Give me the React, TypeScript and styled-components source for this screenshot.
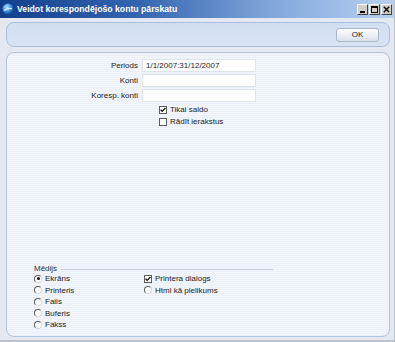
import React from 'react';
import styled, { createGlobalStyle } from 'styled-components';

const GlobalStyle = createGlobalStyle`
	html, body {
		margin: 0;
		padding: 0;
		background: #ffffff;
	}
	body {
		font-family: "Liberation Sans", Arial, sans-serif;
		font-size: 8px;
		color: #1c1c1c;
	}
`

const Window = styled.div`
	width: 395px;
	height: 342px;
	box-sizing: border-box;
	display: flex;
	flex-direction: column;
	background: #e4e9f1;
	border-right: 1px solid #b9c1cb;
	border-bottom: 2px solid #bcc3cc;
`

const TitleBar = styled.div`
	height: 18px;
	flex: none;
	display: flex;
	align-items: center;
	padding: 0 2px 0 2px;
	background: linear-gradient(90deg, #123f8c 0%, #3465b0 35%, #82a8dc 70%, #b9d1f0 100%);
`

const Title = styled.span`
	flex: 1;
	margin-left: 3px;
	color: #ffffff;
	font-weight: bold;
	font-size: 8.7px;
	white-space: nowrap;
`

const Controls = styled.div`
	display: flex;
	gap: 1px;
`

const CtrlButton = styled.div`
	width: 11px;
	height: 11px;
	box-sizing: border-box;
	background: #d4d0c8;
	border: 1px solid;
	border-color: #ffffff #404040 #404040 #ffffff;
	display: flex;
	align-items: center;
	justify-content: center;
`

const Body = styled.div`
	flex: 1;
	display: flex;
	flex-direction: column;
	gap: 5px;
	padding: 4px 4px 3px 6px;
`

const Toolbar = styled.div`
	height: 25px;
	box-sizing: border-box;
	flex: none;
	display: flex;
	align-items: center;
	justify-content: flex-end;
	padding-right: 10px;
	border: 1px solid #a9bedc;
	border-radius: 8px;
	background: linear-gradient(180deg, #d1dff2 0%, #d8e3f3 100%);
`

const OkButton = styled.button`
	width: 43px;
	height: 14px;
	padding: 0;
	font-family: "Liberation Sans", Arial, sans-serif;
	font-size: 8px;
	color: #1c1c1c;
	border: 1px solid #a9b6c8;
	border-radius: 3px;
	background: linear-gradient(180deg, #fbfcfe 0%, #e9eef5 60%, #d9e1ec 100%);
`

const Panel = styled.div`
	flex: 1;
	display: flex;
	flex-direction: column;
	box-sizing: border-box;
	padding: 6px 0 7px 0;
	border: 1px solid #b3c4dd;
	border-radius: 8px;
	background: repeating-linear-gradient(180deg, #ecf0f8 0px, #ecf0f8 1px, #f2f5fa 1px, #f2f5fa 2px);
`

const FormGrid = styled.div`
	display: grid;
	grid-template-columns: 131px 114px;
	column-gap: 4px;
	row-gap: 2px;
	align-items: center;
`

const Label = styled.label`
	text-align: right;
	white-space: nowrap;
`

const Field = styled.div`
	height: 13px;
	box-sizing: border-box;
	background: #ffffff;
	border: 1px solid #dfe3ea;
	padding-left: 3px;
	line-height: 11px;
	white-space: nowrap;
`

const Options = styled.div`
	display: flex;
	flex-direction: column;
	gap: 3px;
	margin: 3px 0 0 152px;
`

const Option = styled.div`
	display: flex;
	align-items: center;
	gap: 3px;
	height: 9px;
	white-space: nowrap;
`

const Box = styled.span`
	width: 8px;
	height: 8px;
	box-sizing: border-box;
	flex: none;
	background: #ffffff;
	border: 1px solid #5a5a5a;
	display: flex;
	align-items: center;
	justify-content: center;
`

const Round = styled.span<{ $on?: boolean }>`
	width: 8px;
	height: 8px;
	box-sizing: border-box;
	flex: none;
	border-radius: 50%;
	background: #ffffff;
	border: 1px solid #7d7d7d;
	border-top-color: #5c5c5c;
	border-left-color: #5c5c5c;
	border-right-color: #d8d8d8;
	border-bottom-color: #d8d8d8;
	display: flex;
	align-items: center;
	justify-content: center;
	&::after {
		content: '';
		display: ${p => (p.$on ? 'block' : 'none')};
		width: 3px;
		height: 3px;
		border-radius: 50%;
		background: #111111;
	}
`

const Group = styled.div`
	margin-top: auto;
	padding-left: 27px;
`

const Legend = styled.div`
	display: flex;
	align-items: center;
	gap: 4px;
	width: 239px;
	height: 10px;
	color: #333333;
	&::after {
		content: '';
		flex: 1;
		height: 1px;
		margin-top: 2px;
		background: #c9ced6;
	}
`

const Columns = styled.div`
	display: grid;
	grid-template-columns: 110px auto;
	margin-top: 1px;
`

const Column = styled.div`
	display: flex;
	flex-direction: column;
	gap: 2.5px;
`

function Check({ checked, children }: { checked?: boolean; children: React.ReactNode }) {
	return (
		<Option>
			<Box>
				{checked && (
					<svg width="6" height="6" viewBox="0 0 6 6">
						<path d="M0.6 2.8 L2.2 4.4 L5.4 1.0" stroke="#111" strokeWidth="1.3" fill="none" />
					</svg>
				)}
			</Box>
			<span>{children}</span>
		</Option>
	)
}

function Radio({ on, children }: { on?: boolean; children: React.ReactNode }) {
	return (
		<Option>
			<Round $on={on} />
			<span>{children}</span>
		</Option>
	)
}

function AppIcon() {
	return (
		<svg width="12" height="12" viewBox="0 0 12 12">
			<defs>
				<radialGradient id="g" cx="40%" cy="35%" r="70%">
					<stop offset="0%" stopColor="#bfe6ff" />
					<stop offset="55%" stopColor="#3a8ee0" />
					<stop offset="100%" stopColor="#0b3d86" />
				</radialGradient>
			</defs>
			<circle cx="6" cy="6" r="5.5" fill="url(#g)" />
			<path d="M2.2 7.5 C4 5.8 6.5 5.2 9.8 5.6" stroke="#e6f4ff" strokeWidth="1.1" fill="none" />
		</svg>
	)
}

export default function App() {
	return (
		<>
			<GlobalStyle />
			<Window>
				<TitleBar>
					<AppIcon />
					<Title>Veidot korespondējošo kontu pārskatu</Title>
					<Controls>
						<CtrlButton>
							<svg width="7" height="7" viewBox="0 0 7 7"><rect x="1" y="5" width="5" height="2" fill="#000" /></svg>
						</CtrlButton>
						<CtrlButton>
							<svg width="7" height="7" viewBox="0 0 7 7"><rect x="0.5" y="0.5" width="6" height="6" fill="none" stroke="#000" /><rect x="0.5" y="0.5" width="6" height="1.5" fill="#000" /></svg>
						</CtrlButton>
						<CtrlButton>
							<svg width="7" height="7" viewBox="0 0 7 7"><path d="M0.8 0.8 L6.2 6.2 M6.2 0.8 L0.8 6.2" stroke="#000" strokeWidth="1.4" /></svg>
						</CtrlButton>
					</Controls>
				</TitleBar>
				<Body>
					<Toolbar>
						<OkButton>OK</OkButton>
					</Toolbar>
					<Panel>
						<FormGrid>
							<Label>Periods</Label>
							<Field>1/1/2007:31/12/2007</Field>
							<Label>Konti</Label>
							<Field />
							<Label>Koresp. konti</Label>
							<Field />
						</FormGrid>
						<Options>
							<Check checked>Tikai saldo</Check>
							<Check>Rādīt ierakstus</Check>
						</Options>
						<Group>
							<Legend>Mēdijs</Legend>
							<Columns>
								<Column>
									<Radio on>Ekrāns</Radio>
									<Radio>Printeris</Radio>
									<Radio>Fails</Radio>
									<Radio>Buferis</Radio>
									<Radio>Fakss</Radio>
								</Column>
								<Column>
									<Check checked>Printera dialogs</Check>
									<Radio>Html kā pielikums</Radio>
								</Column>
							</Columns>
						</Group>
					</Panel>
				</Body>
			</Window>
		</>
	)
}
